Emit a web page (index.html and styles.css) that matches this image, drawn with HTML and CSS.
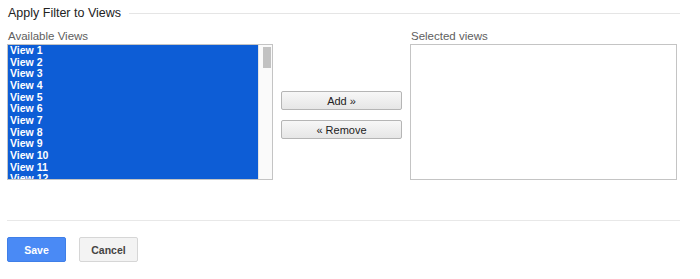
FILE: index.html
```html
<!DOCTYPE html>
<html lang="en">
<head>
  <meta charset="UTF-8" />
  <title>Apply Filter to Views</title>
  <link rel="stylesheet" href="styles.css">
</head>
<body>
  <div class="panel">
    <!-- Section heading with rule -->
    <div class="heading">
      <span class="heading-text">Apply Filter to Views</span>
      <span class="heading-rule"></span>
    </div>

    <div class="picker">
      <div class="col col-left">
        <div class="label">Available Views</div>
        <div class="listbox">
          <div class="items">
            <div class="item">View 1</div>
            <div class="item">View 2</div>
            <div class="item">View 3</div>
            <div class="item">View 4</div>
            <div class="item">View 5</div>
            <div class="item">View 6</div>
            <div class="item">View 7</div>
            <div class="item">View 8</div>
            <div class="item">View 9</div>
            <div class="item">View 10</div>
            <div class="item">View 11</div>
            <div class="item">View 12</div>
          </div>
          <div class="scrollbar"><div class="thumb"></div></div>
        </div>
      </div>

      <div class="col col-mid">
        <button class="move-btn">Add &raquo;</button>
        <button class="move-btn">&laquo; Remove</button>
      </div>

      <div class="col col-right">
        <div class="label">Selected views</div>
        <div class="listbox empty"></div>
      </div>
    </div>

    <div class="divider"></div>

    <div class="actions">
      <button class="btn btn-save">Save</button>
      <button class="btn btn-cancel">Cancel</button>
    </div>
  </div>
</body>
</html>
```

FILE: styles.css
```css
body {
  margin: 0;
  font-family: "Liberation Sans", Arial, sans-serif;
  background: white;
  color: #222;
}

.panel {
  padding: 5px 20px 0 7px;
}

/* Heading */
.heading {
  display: flex;
  align-items: center;
  height: 16px;
}

.heading-text {
  font-size: 12.5px;
  color: #222;
  padding-left: 1px;
}

.heading-rule {
  flex: 1;
  height: 1px;
  background: #e5e5e5;
  margin-left: 8px;
  margin-top: 1px;
}

/* Picker */
.picker {
  display: flex;
  margin-top: 8px;
}

.col-left {
  width: 266px;
}

.col-mid {
  width: 121px;
  margin-left: 8px;
  padding-top: 62px;
  display: flex;
  flex-direction: column;
  gap: 10px;
}

.col-right {
  width: 267px;
  margin-left: 8px;
}

.label {
  font-size: 11.5px;
  color: #5e5e5e;
  height: 15px;
  line-height: 15px;
  padding-left: 1px;
}

.listbox {
  height: 134px;
  border: 1px solid #c4c4c4;
  display: flex;
  overflow: hidden;
  background: white;
}

.items {
  flex: 1;
  background: #0d5dd6;
  padding-left: 2px;
}

.item {
  font-size: 10.5px;
  font-weight: bold;
  color: white;
  line-height: 11.67px;
  height: 11.67px;
}

.scrollbar {
  width: 14px;
  background: #fafafa;
  border-left: 1px solid #e4e4e4;
  box-sizing: border-box;
  padding: 2px 1px 0 4px;
}

.thumb {
  height: 21px;
  background: #c2c2c2;
}

.move-btn {
  height: 19px;
  width: 121px;
  margin: 0;
  padding: 0;
  font-family: inherit;
  font-size: 11px;
  color: #222;
  background: linear-gradient(#f7f7f7, #e6e6e6);
  border: 1px solid #b5b5b5;
  border-radius: 2px;
}

/* Footer */
.divider {
  height: 1px;
  background: #e8e8e8;
  margin-top: 40px;
}

.actions {
  display: flex;
  gap: 13px;
  margin-top: 16px;
}

.btn {
  height: 25px;
  width: 59px;
  margin: 0;
  padding: 0;
  font-family: inherit;
  font-size: 10.5px;
  font-weight: bold;
  border-radius: 2px;
}

.btn-save {
  background: #4a8af5;
  border: 1px solid #3f7fe8;
  color: white;
}

.btn-cancel {
  background: #f3f3f3;
  border: 1px solid #d6d6d6;
  color: #444;
}
```
